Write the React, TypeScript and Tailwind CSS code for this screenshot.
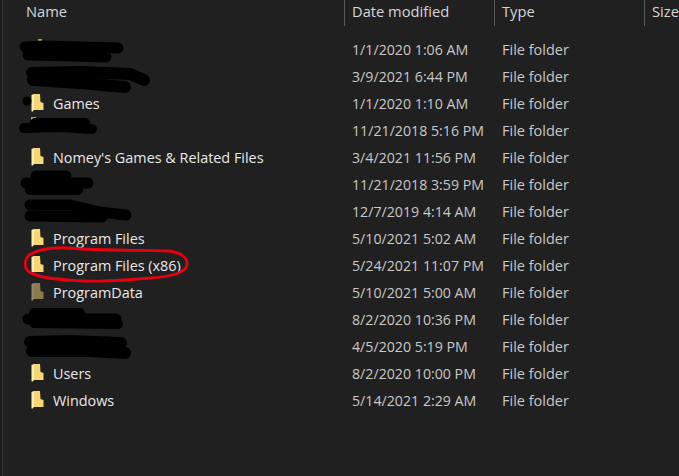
const rows = [
  { name: "", date: "1/1/2020 1:06 AM" },
  { name: "", date: "3/9/2021 6:44 PM" },
  { name: "Games", date: "1/1/2020 1:10 AM" },
  { name: "", date: "11/21/2018 5:16 PM" },
  { name: "Nomey's Games & Related Files", date: "3/4/2021 11:56 PM" },
  { name: "", date: "11/21/2018 3:59 PM" },
  { name: "", date: "12/7/2019 4:14 AM" },
  { name: "Program Files", date: "5/10/2021 5:02 AM" },
  { name: "Program Files (x86)", date: "5/24/2021 11:07 PM" },
  { name: "ProgramData", date: "5/10/2021 5:00 AM", dim: true },
  { name: "", date: "8/2/2020 10:36 PM" },
  { name: "", date: "4/5/2020 5:19 PM" },
  { name: "Users", date: "8/2/2020 10:00 PM" },
  { name: "Windows", date: "5/14/2021 2:29 AM" },
];

function FolderIcon({ dim }: { dim?: boolean }) {
  return (
    <svg width="13" height="18" viewBox="0 0 13 18" className={dim ? "opacity-50" : ""}>
      <path d="M3 0 L9 0 L9.5 8 L12.5 9 L12.5 16 L3 16 Z" fill="#f7d674" />
      <path d="M0.5 1 L3 0 L3 16 L1 18 L0.5 17 Z" fill="#fdeeb0" />
    </svg>
  );
}

function Header({ label, width, sep }: { label: string; width: string; sep?: boolean }) {
  return (
    <div className={`h-[26px] shrink-0 pl-[7px] ${width} ${sep ? "border-l border-[#5a5a5a]" : ""}`}>
      <span className="text-[14.7px] leading-[22px] text-[#d6d6d6]">{label}</span>
    </div>
  );
}

// 가려진 이름 + 빨간 동그라미
function Marks() {
  return (
    <svg className="absolute inset-0 pointer-events-none" width="679" height="476" viewBox="0 0 679 476">
      <rect x="38" y="39" width="4" height="4" fill="#b89a55" />
      <rect x="31" y="117" width="5" height="3" fill="#b89a55" />
      <g stroke="#000" strokeLinecap="round" strokeLinejoin="round" fill="none">
        <path d="M25 47 L45 46 L118 48" strokeWidth="11" />
        <path d="M28 55 L75 56 L106 57" strokeWidth="11" />
        <path d="M32 73 L80 72 L130 74 L144 80" strokeWidth="12" />
        <path d="M33 80 L80 83 L125 87" strokeWidth="12" />
        <path d="M35 123 L85 123" strokeWidth="10" />
        <path d="M24 128 L60 127 L92 129" strokeWidth="10" />
        <path d="M36 176 L66 176" strokeWidth="11" />
        <path d="M26 183 L88 183" strokeWidth="11" />
        <path d="M30 190 L78 190" strokeWidth="10" />
        <path d="M30 205 L70 205 L100 212 L126 215" strokeWidth="11" />
        <path d="M30 216 L102 217" strokeWidth="11" />
        <path d="M34 313 L80 313" strokeWidth="10" />
        <path d="M28 319 L116 319" strokeWidth="11" />
        <path d="M34 323 L118 324" strokeWidth="10" />
        <path d="M30 342 L70 341 L121 343" strokeWidth="12" />
        <path d="M32 351 L90 351 L125 353" strokeWidth="12" />
      </g>
      <circle cx="27" cy="101" r="4.5" fill="#000" />
      <path
        d="M29 255 C37 250 52 247 70 248 C100 251 140 250 168 251 C181 252 188 258 187 265 C186 272 172 277 150 278 C125 280 100 282 85 281 C60 280 34 278 27 270 C24 265 25 259 29 255 Z"
        fill="none"
        stroke="#e60012"
        strokeWidth="2.8"
      />
    </svg>
  );
}

export default function App() {
  return (
    <div
      className="relative h-[476px] w-[679px] overflow-hidden bg-[#202020] text-[14.4px]"
      style={{ fontFamily: '"Open Sans", "Noto Sans", sans-serif' }}
    >
      <div className="absolute left-0 top-0 h-full w-[3px] border-r border-[#333333] bg-[#1b1b1b]" />
      <div className="flex h-[26px] pl-[19px]">
        <Header label="Name" width="w-[325px]" />
        <Header label="Date modified" width="w-[150px]" sep />
        <Header label="Type" width="w-[150px]" sep />
        <Header label="Size" width="w-[35px]" sep />
      </div>
      <div className="flex flex-col pt-[10px]">
        {rows.map((r) => (
          <div key={r.date} className="flex h-[27px] items-center">
            <div className="flex w-[344px] shrink-0 items-center pl-[31px]">
              {r.name !== "" && <FolderIcon dim={r.dim} />}
              {r.name !== "" && <span className="ml-[9px] whitespace-nowrap text-[#e8e8e8]">{r.name}</span>}
            </div>
            <div className="w-[150px] shrink-0 pl-[8px] text-[14.2px] text-[#c8c8c8]">{r.date}</div>
            <div className="pl-[8px] text-[14.5px] text-[#c8c8c8]">File folder</div>
          </div>
        ))}
      </div>
      <Marks />
    </div>
  );
}
